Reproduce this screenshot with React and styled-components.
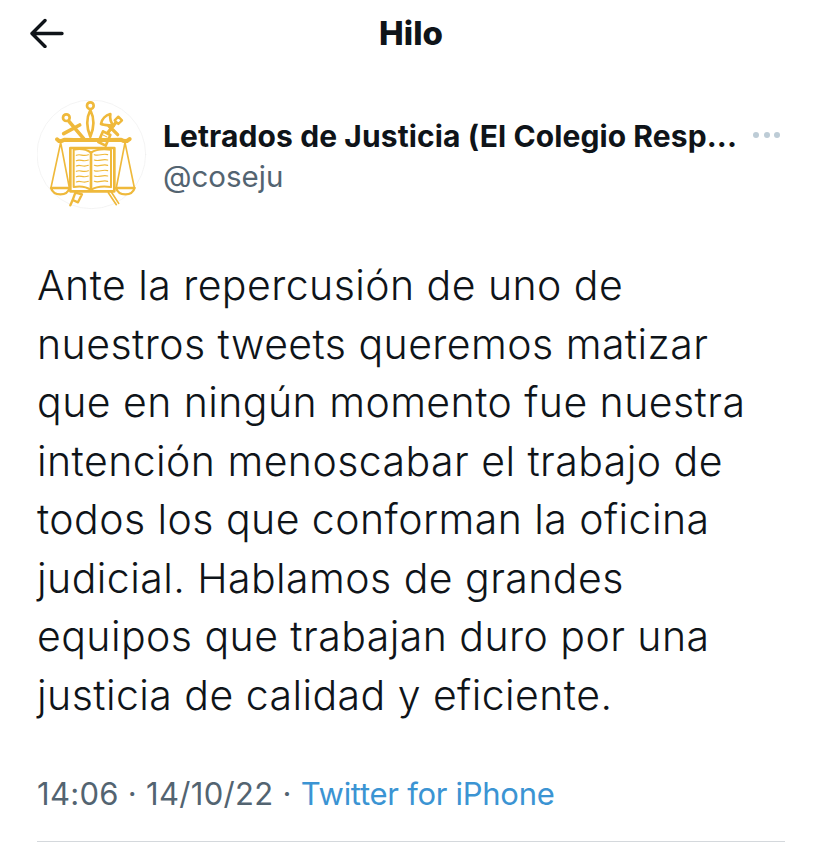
import styled, { createGlobalStyle } from "styled-components";

const GlobalStyle = createGlobalStyle`
  html, body {
    margin: 0;
    background: #fff;
  }
  body {
    font-family: Inter, "Noto Sans", "Liberation Sans", sans-serif;
    color: #0f1419;
  }
`

const Page = styled.main`
  width: 825px;
  height: 863px;
  overflow: hidden;
  background: #fff;
  display: flex;
  flex-direction: column;
`
const Header = styled.header`
  height: 66px;
  display: grid;
  grid-template-columns: 1fr auto 1fr;
  align-items: center;
  padding: 0 30px;
`
const BackButton = styled.button`
  border: 0;
  background: none;
  padding: 0;
  width: 34px;
  height: 30px;
  display: block;
  color: #0f1419;
`
const Title = styled.h1`
  margin: 0 3px 0 0;
  font-size: 33px;
  line-height: 36px;
  font-weight: 800;
`
const Tweet = styled.article`
  padding: 34px 40px 0 37px;
  display: flex;
  flex-direction: column;
`
const Author = styled.div`
  display: flex;
  align-items: center;
  gap: 16px;
`
const AvatarBox = styled.div`
  width: 110px;
  height: 110px;
  flex: none;
`
const Names = styled.div`
  flex: 1;
  min-width: 0;
  display: flex;
  flex-direction: column;
  gap: 4px;
  margin-top: 1px;
`
const NameRow = styled.div`
  display: flex;
  align-items: center;
  gap: 16px;
`
const Name = styled.span`
  font-size: 30px;
  line-height: 36px;
  font-weight: 700;
  letter-spacing: 0.1px;
  white-space: nowrap;
`
const Handle = styled.span`
  font-size: 29.5px;
  line-height: 36px;
  color: #536471;
`
const Dots = styled.div`
  display: flex;
  gap: 4.5px;
  margin-top: -1px;
`
const Dot = styled.i`
  width: 6px;
  height: 6px;
  border-radius: 50%;
  background: #bdccd6;
`
const Body = styled.p`
  margin: 46px 0 0;
  font-size: 41px;
  line-height: 58.5px;
  font-weight: 340;
  letter-spacing: 0.45px;
  white-space: pre-line;
`
const Meta = styled.div`
  margin-top: 51px;
  font-size: 31px;
  line-height: 38px;
  letter-spacing: 0.3px;
  color: #536471;
`
const Source = styled.span`
  color: #3b94d3;
  letter-spacing: -0.28px;
`
const Rule = styled.hr`
  margin: 28px 0 0;
  width: 748px;
  border: 0;
  border-top: 1px solid #d4d8dc;
`

const Arrow = () => (
  <svg width="34" height="30" viewBox="0 0 34 30" fill="none" stroke="currentColor" strokeWidth="3.4" strokeLinecap="round" strokeLinejoin="round">
    <path d="M32 15.5H2M15 2.5 2 15.5l13 13" />
  </svg>
)

const Logo = () => (
  <svg width="110" height="110" viewBox="52 32 330 330" fill="none" stroke="#efb93b" strokeWidth="5" strokeLinecap="round" strokeLinejoin="round">
    <circle cx="215" cy="195" r="163" fill="#fff" stroke="#efefef" strokeWidth="2" />
    {/* centre sword */}
    <circle cx="212" cy="49" r="10" strokeWidth="8" />
    <path d="M212 62c-12 24-12 52 0 80 12-28 12-56 0-80z" strokeWidth="8" />
    {/* left sword */}
    <circle cx="140" cy="85" r="10" strokeWidth="8" />
    <path d="M148 96l44 52M132 133l48-26" strokeWidth="11" />
    {/* axe on the right */}
    <path d="M244 104c2-14 14-26 28-30-2 12 0 24 10 36-10-2-28-2-38-6z" strokeWidth="8" />
    <path d="M296 82l11 11-11 11-11-11z" strokeWidth="7" />
    <path d="M288 100l-36 46M268 110l26 26" strokeWidth="10" />
    <path d="M236 158l14-32 22 11-14 32z" fill="#fff" strokeWidth="8" />
    <path d="M246 146l12 6M250 137l12 6" strokeWidth="3" />
    {/* beam of the scales */}
    <path d="M112 150c7 9 15 6 22 1l30 1h100l40-1c7 5 16 8 26-2" strokeWidth="12" />
    <path d="M123 160 94 295M123 160l26 135M316 160l-26 135M316 160l28 135" strokeWidth="5" />
    <path d="M94 296h56c-4 13-16 19-28 19s-24-6-28-19zM289 296h56c-4 13-16 19-28 19s-24-6-28-19z" fill="#fff" strokeWidth="7" />
    {/* book */}
    <path d="M152 176h132v130H152z" fill="#fff" strokeWidth="8" />
    <path d="M214 190c-14-10-36-12-52-9v112c16-3 38-1 52 9 14-10 38-12 60-9V181c-22-3-46-1-60 9z" fill="#fff" strokeWidth="6" />
    <path d="M214 190v112" strokeWidth="8" />
    <path d="M170 198c12-6 20 5 36-2M170 214c12-6 20 5 36-2M170 230c12-6 20 5 36-2M170 246c12-6 20 5 36-2M170 262c12-6 20 5 36-2M170 278c12-6 20 5 36-2M224 196c14 6 24-5 40 0M224 212c14 6 24-5 40 0M224 228c14 6 24-5 40 0M224 244c14 6 24-5 40 0M224 260c14 6 24-5 40 0M224 276c14 6 24-5 40 0" strokeWidth="3.5" />
    {/* handles under the book */}
    <path d="M167 310l-8 22 16 7 12-24z" fill="#fff" strokeWidth="7" />
    <path d="M158 334l-6 14" strokeWidth="7" />
    <path d="M266 310l24 36M275 308l22 34" strokeWidth="5" />
  </svg>
)

export default function App() {
  return (
    <Page>
      <GlobalStyle />
      <Header>
        <BackButton aria-label="Volver"><Arrow /></BackButton>
        <Title>Hilo</Title>
      </Header>
      <Tweet>
        <Author>
          <AvatarBox><Logo /></AvatarBox>
          <Names>
            <NameRow>
              <Name>Letrados de Justicia (El Colegio Resp...</Name>
              <Dots><Dot /><Dot /><Dot /></Dots>
            </NameRow>
            <Handle>@coseju</Handle>
          </Names>
        </Author>
        <Body>{`Ante la repercusión de uno de
nuestros tweets queremos matizar
que en ningún momento fue nuestra
intención menoscabar el trabajo de
todos los que conforman la oficina
judicial. Hablamos de grandes
equipos que trabajan duro por una
justicia de calidad y eficiente.`}</Body>
        <Meta>14:06 · 14/10/22 · <Source>Twitter for iPhone</Source></Meta>
        <Rule />
      </Tweet>
    </Page>
  )
}
